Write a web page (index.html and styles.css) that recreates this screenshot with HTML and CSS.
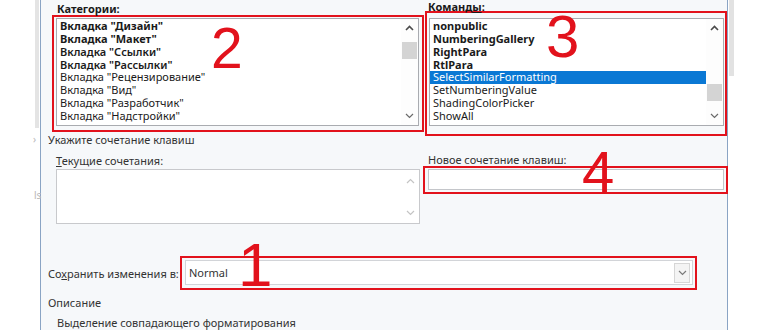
FILE: index.html
```html
<!DOCTYPE html>
<html lang="ru">
<head>
  <meta charset="UTF-8">
  <title>Настройка клавиатуры</title>
  <link rel="stylesheet" href="styles.css">
</head>
<body>
<div class="screen">
  <div class="side-left">
    <div class="side-band"></div>
    <span class="side-char c1">›</span>
    <span class="side-char c2">ls</span>
  </div>

  <div class="dialog">
    <div class="lists">
      <div class="col col-cat">
        <div class="label label-cat">Категории:</div>
        <div class="mark mark-cat">
          <div class="listbox">
            <div class="rows">
              <div class="row b">Вкладка "Дизайн"</div>
              <div class="row b">Вкладка "Макет"</div>
              <div class="row sb">Вкладка "Ссылки"</div>
              <div class="row sb">Вкладка "Рассылки"</div>
              <div class="row">Вкладка "Рецензирование"</div>
              <div class="row">Вкладка "Вид"</div>
              <div class="row">Вкладка "Разработчик"</div>
              <div class="row">Вкладка "Надстройки"</div>
            </div>
            <div class="scroll">
              <svg class="arrow" width="9" height="6" viewBox="0 0 9 6"><polyline points="1,5 4.5,1.5 8,5" fill="none" stroke="#4a4a4a" stroke-width="1.6"/></svg>
              <div class="track"><div class="thumb thumb-top"></div></div>
              <svg class="arrow" width="9" height="6" viewBox="0 0 9 6"><polyline points="1,1 4.5,4.5 8,1" fill="none" stroke="#6a6a6a" stroke-width="1.2"/></svg>
            </div>
          </div>
        </div>
      </div>

      <div class="col col-cmd">
        <div class="label label-cmd">Команд<u>ы</u>:</div>
        <div class="mark mark-cmd">
          <div class="listbox">
            <div class="rows">
              <div class="row b">nonpublic</div>
              <div class="row b">NumberingGallery</div>
              <div class="row b">RightPara</div>
              <div class="row b">RtlPara</div>
              <div class="row selected">SelectSimilarFormatting</div>
              <div class="row">SetNumberingValue</div>
              <div class="row">ShadingColorPicker</div>
              <div class="row">ShowAll</div>
            </div>
            <div class="scroll">
              <svg class="arrow" width="9" height="6" viewBox="0 0 9 6"><polyline points="1,5 4.5,1.5 8,5" fill="none" stroke="#4a4a4a" stroke-width="1.6"/></svg>
              <div class="track"><div class="thumb thumb-mid"></div></div>
              <svg class="arrow" width="9" height="6" viewBox="0 0 9 6"><polyline points="1,1 4.5,4.5 8,1" fill="none" stroke="#6a6a6a" stroke-width="1.2"/></svg>
            </div>
          </div>
        </div>
      </div>
    </div>

    <div class="group-title">Укажите сочетание клавиш</div>

    <div class="keys">
      <div class="col">
        <div class="label label-cur"><u>Т</u>екущие сочетания:</div>
        <div class="memo">
          <div class="memo-scroll">
            <svg width="9" height="6" viewBox="0 0 9 6"><polyline points="1,5 4.5,1.5 8,5" fill="none" stroke="#c4c4c4" stroke-width="1.2"/></svg>
            <svg width="9" height="6" viewBox="0 0 9 6"><polyline points="1,1 4.5,4.5 8,1" fill="none" stroke="#c4c4c4" stroke-width="1.2"/></svg>
          </div>
        </div>
      </div>
      <div class="col">
        <div class="label label-new">Новое сочетание клавиш:</div>
        <div class="mark mark-new">
          <div class="input"></div>
        </div>
      </div>
    </div>

    <div class="save-row">
      <div class="save-label">Со<u>х</u>ранить изменения в:</div>
      <div class="mark mark-save">
        <div class="select">
          <span class="select-value">Normal</span>
          <span class="select-btn">
            <svg width="9" height="6" viewBox="0 0 9 6"><polyline points="1,1 4.5,4.5 8,1" fill="none" stroke="#7a7a7a" stroke-width="1.2"/></svg>
          </span>
        </div>
      </div>
    </div>

    <div class="desc-title">Описание</div>
    <div class="desc-text">Выделение совпадающего форматирования</div>
  </div>

  <div class="side-right">
    <div class="side-strip"></div>
  </div>

  <span class="digit d1">1</span>
  <span class="digit d2">2</span>
  <span class="digit d3">3</span>
  <span class="digit d4">4</span>
</div>
</body>
</html>
```

FILE: styles.css
```css
html, body {
  margin: 0;
  padding: 0;
  background: #ffffff;
}

.screen {
  position: relative;
  display: flex;
  width: 770px;
  height: 330px;
  overflow: hidden;
  font-family: "Noto Sans", "Open Sans", sans-serif;
  font-size: 11px;
  color: #2b2b2b;
}

/* outside the dialog */
.side-left {
  position: relative;
  width: 40px;
  flex: 0 0 40px;
}

.side-band {
  margin-left: 35px;
  width: 4px;
  height: 128px;
  background: #e4e4e4;
}

.side-char {
  position: absolute;
  color: #b8b8b8;
  font-size: 10px;
}

.side-char.c1 { left: 33px; top: 132px; }
.side-char.c2 { left: 34px; top: 188px; }

.side-right {
  flex: 1;
}

.side-strip {
  margin-left: 1px;
  width: 5px;
  height: 76px;
  background: #e2e2e2;
}

/* dialog */
.dialog {
  width: 688px;
  flex: 0 0 688px;
  height: 330px;
  padding-left: 7px;
  box-sizing: border-box;
  background: #f6f8fa;
  border-left: 1px solid #8aa4c4;
  border-right: 1px solid #8aa4c4;
}

.lists {
  display: grid;
  grid-template-columns: 372px 302px;
  column-gap: 1px;
  margin-left: 4px;
  align-items: start;
}

.label {
  color: #333333;
}

.label-cat {
  margin-top: 3px;
  height: 12px;
  line-height: 12px;
  padding-left: 5px;
  font-weight: bold;
  color: #1a1a1a;
}

.label-cmd {
  height: 11px;
  line-height: 14px;
  padding-left: 3px;
  font-weight: bold;
  color: #1a1a1a;
}

/* red annotation frames */
.mark {
  border: 2px solid #e2121c;
}

.mark-cat {
  height: 117px;
  box-sizing: border-box;
  padding: 1px 3px 0 2px;
}

.mark-cmd {
  height: 125px;
  box-sizing: border-box;
  padding: 5px 1px 0 2px;
}

.listbox {
  display: flex;
  background: #ffffff;
  border: 1px solid #a9abb0;
  height: 108px;
  box-sizing: border-box;
}

.rows {
  flex: 1;
  padding-top: 1px;
}

.row {
  height: 12.86px;
  line-height: 12.86px;
  padding-left: 3px;
  white-space: nowrap;
  color: #1a1a1a;
}

.row.b { font-weight: bold; }
.row.sb { font-weight: 600; }

.row.selected {
  background: #0a78d4;
  color: #ffffff;
}

.scroll {
  width: 17px;
  display: flex;
  flex-direction: column;
  align-items: center;
  background: #fdfdfd;
}

.arrow {
  margin: 6px 0;
}

.track {
  flex: 1;
  width: 100%;
  position: relative;
}

.thumb {
  position: absolute;
  left: 1px;
  right: 1px;
  height: 17px;
  background: #d4d4d4;
}

.thumb-top { top: 5px; }
.thumb-mid { top: 47px; }

.group-title {
  margin-top: -3px;
  line-height: 14px;
  color: #333333;
}

.keys {
  display: grid;
  grid-template-columns: 364px 305px;
  column-gap: 3px;
  margin-left: 8px;
  margin-top: 7px;
  align-items: start;
}

.label-cur {
  line-height: 14px;
}

.label-new {
  line-height: 12px;
  padding-left: 5px;
}

.memo {
  margin-top: 1px;
  height: 55px;
  box-sizing: border-box;
  background: #ffffff;
  border: 1px solid #c8c9cc;
  display: flex;
  justify-content: flex-end;
}

.memo-scroll {
  width: 17px;
  display: flex;
  flex-direction: column;
  align-items: center;
  justify-content: space-between;
  padding: 8px 0 7px;
}

.mark-new {
  height: 28px;
  box-sizing: border-box;
  padding: 1px 2px 0 3px;
}

.input {
  height: 21px;
  box-sizing: border-box;
  background: #ffffff;
  border: 1px solid #c4c6ca;
}

.save-row {
  display: flex;
  align-items: center;
  margin-top: 32px;
}

.save-label {
  flex: 0 0 132px;
  color: #333333;
}

.mark-save {
  width: 517px;
  height: 34px;
  box-sizing: border-box;
  padding: 2px 2px 0 3px;
}

.select {
  height: 25px;
  box-sizing: border-box;
  background: #ffffff;
  border: 1px solid #d2d4d8;
  display: flex;
  align-items: center;
  justify-content: space-between;
  padding: 0 2px 0 3px;
}

.select-value {
  color: #333333;
}

.select-btn {
  width: 16px;
  height: 20px;
  box-sizing: border-box;
  border: 1px solid #d6d6d6;
  background: #f4f4f4;
  display: flex;
  align-items: center;
  justify-content: center;
}

.desc-title {
  margin-top: 6px;
  line-height: 14px;
  color: #333333;
}

.desc-text {
  margin-top: 6px;
  margin-left: 9px;
  line-height: 14px;
  color: #333333;
}

/* big annotation digits */
.digit {
  position: absolute;
  font-family: "Liberation Sans", Arial, sans-serif;
  line-height: 1;
  color: #e2121c;
}

.d1 { font-size: 62px; left: 238px; top: 234px; }
.d2 { font-size: 57px; left: 211px; top: 20px; }
.d3 { font-size: 60px; left: 546px; top: 7px; }
.d4 { font-size: 58px; left: 582px; top: 143px; }
```
